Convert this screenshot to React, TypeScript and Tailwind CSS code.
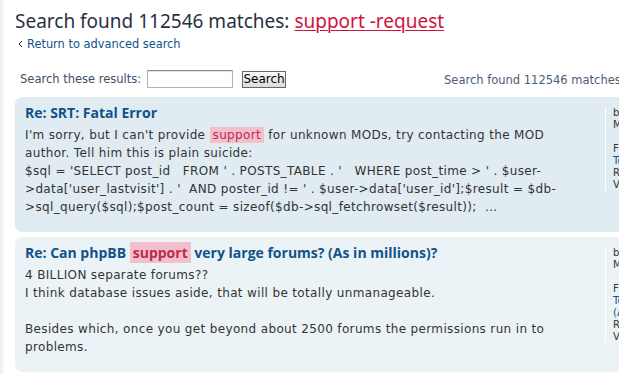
import React from 'react';

const hl = 'bg-[#f3bfcc] text-[#bc2a4d] px-[3px] py-[1px]';

type ProfileRow = { text: string; link?: boolean };

const PostProfile: React.FC<{ rows: ProfileRow[] }> = ({ rows }) => (
  <dl className="mt-[10px] self-start border-l border-white pl-[7px] text-[10px] leading-[12px] text-[#333] whitespace-nowrap overflow-hidden">
    {rows.map((r, i) => (
      <dd key={i} className={`h-[12px] ${r.link ? 'text-[#105289]' : ''}`}>
        {r.text}
      </dd>
    ))}
  </dl>
);

export default function App() {
  return (
    <div className="w-[619px] h-[374px] overflow-hidden bg-[linear-gradient(to_right,#ececec,#ffffff_5px)] font-['DejaVu_Sans',sans-serif] text-[#333]">
      <h2 className="pl-[15px] pt-[9px] text-[19px] leading-[24px] text-[#28313f] font-['Noto_Sans',sans-serif] whitespace-nowrap">
        Search found 112546 matches:{' '}
        <a className="text-[#d31141] underline decoration-1 underline-offset-2">support -request</a>
      </h2>

      <div className="mt-[4px] pl-[18px] flex items-center text-[11.4px] leading-[14px] text-[#105289]">
        <svg width="5" height="6" viewBox="0 0 5 6" className="mr-[4px] shrink-0">
          <path d="M3 0h1v1H3zM2 1h1v1H2zM1 2h1v2H1zM2 4h1v1H2zM3 5h1v1H3z" fill="#222" />
        </svg>
        <a>Return to advanced search</a>
      </div>

      <div className="mt-[19px] pl-[20px] flex items-center text-[11.5px] leading-[14px] whitespace-nowrap">
        <label className="w-[127px] shrink-0 text-[#425067]">Search these results:</label>
        <input
          type="text"
          className="w-[86px] h-[18px] shrink-0 border border-[#b4b4b4] border-t-[#8c8c8c] bg-white shadow-[inset_0_1px_1px_rgba(0,0,0,0.12)]"
        />
        <button className="ml-[9px] w-[44px] h-[17px] mt-[1px] shrink-0 border border-[#666] bg-[linear-gradient(#fafafa,#dcdcdc)] text-[12px] leading-[15px] text-black">
          Search
        </button>
        <span className="ml-[158px] mt-[1px] shrink-0 text-[#4c5d77]">Search found 112546 matches</span>
      </div>

      <div className="mt-[9px] ml-[15px] w-[680px] h-[135px] rounded-[7px] bg-[#e1ebf2] flex">
        <div className="w-[590px] shrink-0 pl-[10px] pt-[7px]">
          <h3 className="text-[14px] leading-[17px] font-bold text-[#105289] mb-[5px] font-['Open_Sans',sans-serif]">
            Re: SRT: Fatal Error
          </h3>
          <div className="text-[12px] leading-[18px] tracking-[0.35px] whitespace-pre">
            <div>
              I'm sorry, but I can't provide <span className={hl}>support</span> for unknown MODs, try contacting the MOD
            </div>
            <div>author. Tell him this is plain suicide:</div>
            <div>{"$sql = 'SELECT post_id   FROM ' . POSTS_TABLE . '   WHERE post_time > ' . $user-"}</div>
            <div>{">data['user_lastvisit'] . '  AND poster_id != ' . $user->data['user_id'];$result = $db-"}</div>
            <div>{'>sql_query($sql);$post_count = sizeof($db->sql_fetchrowset($result));  ...'}</div>
          </div>
        </div>
        <PostProfile
          rows={[
            { text: 'by Mike' },
            { text: 'Mon Feb 02, 2009 1:46 pm' },
            { text: '' },
            { text: 'Forum: [2.0.x] Support Forum' },
            { text: 'Topic: SRT: Fatal Error', link: true },
            { text: 'Replies: 3' },
            { text: 'Views: 412' },
          ]}
        />
      </div>

      <div className="mt-[5px] ml-[15px] w-[680px] h-[135px] rounded-[7px] bg-[#ecf3f7] flex">
        <div className="w-[590px] shrink-0 pl-[10px] pt-[7px]">
          <h3 className="text-[14px] leading-[17px] font-bold text-[#105289] mb-[5px] whitespace-nowrap font-['Open_Sans',sans-serif]">
            Re: Can phpBB <span className={hl}>support</span> very large forums? (As in millions)?
          </h3>
          <div className="text-[12px] leading-[18px] tracking-[0.35px] whitespace-pre">
            <div>4 BILLION separate forums??</div>
            <div>I think database issues aside, that will be totally unmanageable.</div>
            <div>{' '}</div>
            <div>Besides which, once you get beyond about 2500 forums the permissions run in to</div>
            <div>problems.</div>
          </div>
        </div>
        <PostProfile
          rows={[
            { text: 'by Mike' },
            { text: 'Mon Jan 19, 2009 4:12 pm' },
            { text: '' },
            { text: 'Forum: [3.0.x] Discussion' },
            { text: 'Topic: Can phpBB support', link: true },
            { text: '(As in millions)?', link: true },
            { text: 'Replies: 14' },
            { text: 'Views: 2107' },
          ]}
        />
      </div>
    </div>
  );
}
